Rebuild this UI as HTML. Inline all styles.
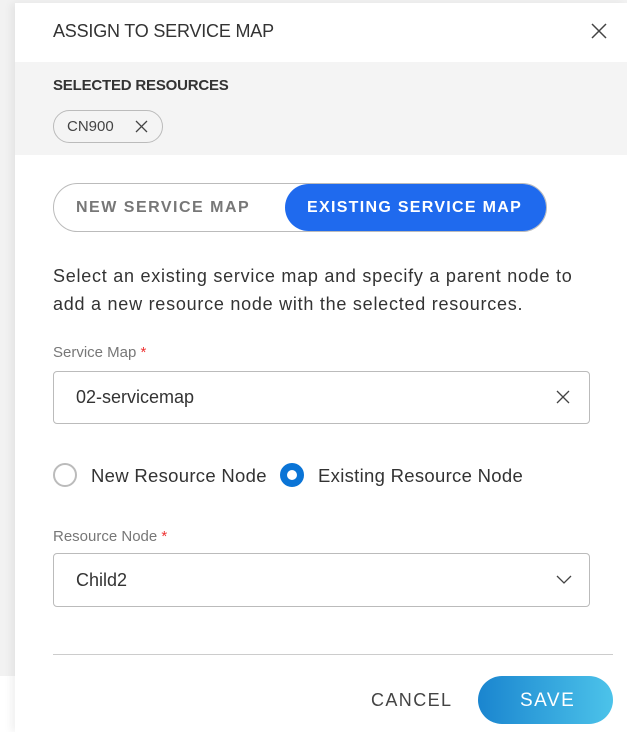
<!DOCTYPE html>
<html><head><style>
*{margin:0;padding:0;box-sizing:border-box}
body{width:627px;height:732px;background:#f2f2f2;font-family:"Liberation Sans",sans-serif;position:relative;overflow:hidden;color:#333}
.panel{position:absolute;left:15px;top:3px;width:612px;height:729px;background:#fff;box-shadow:-4px 0 8px rgba(0,0,0,0.06)}
.a{position:absolute}
</style></head><body>
<div class="a" style="left:0;top:676px;width:15px;height:56px;background:#fff"></div>
<div class="panel"></div>
<div class="a" style="left:53px;top:21px;font-size:18px;color:#333;letter-spacing:-0.2px">ASSIGN TO SERVICE MAP</div>
<svg class="a" style="left:590px;top:22px" width="18" height="18" viewBox="0 0 18 18"><path d="M2 2L16 16M16 2L2 16" stroke="#444" stroke-width="1.5"/></svg>
<div class="a" style="left:15px;top:62px;width:612px;height:93px;background:#f4f4f4"></div>
<div class="a" style="left:53px;top:77px;font-size:15px;font-weight:bold;color:#333;letter-spacing:-0.2px">SELECTED RESOURCES</div>
<div class="a" style="left:53px;top:110px;width:110px;height:33px;border:1px solid #bbb;border-radius:17px"></div>
<div class="a" style="left:67px;top:118px;font-size:15px;color:#444">CN900</div>
<svg class="a" style="left:134px;top:119px" width="15" height="15" viewBox="0 0 15 15"><path d="M2 2L13 13M13 2L2 13" stroke="#444" stroke-width="1.3"/></svg>
<div class="a" style="left:53px;top:183px;width:494px;height:49px;border:1px solid #bbb;border-radius:25px"></div>
<div class="a" style="left:285px;top:184px;width:261px;height:47px;background:#1f6aee;border-radius:24px"></div>
<div class="a" style="left:76px;top:199px;font-size:16px;font-weight:bold;color:#777;letter-spacing:1.5px">NEW SERVICE MAP</div>
<div class="a" style="left:307px;top:199px;font-size:16px;font-weight:bold;color:#fff;letter-spacing:1.3px">EXISTING SERVICE MAP</div>
<div class="a" style="left:53px;top:262px;font-size:18px;color:#333;line-height:28px;width:570px;letter-spacing:0.75px;white-space:nowrap">Select an existing service map and specify a parent node to<br>add a new resource node with the selected resources.</div>
<div class="a" style="left:53px;top:344px;font-size:15px;color:#777">Service Map <span style="color:#e33">*</span></div>
<div class="a" style="left:53px;top:371px;width:537px;height:53px;border:1px solid #bbb;border-radius:4px"></div>
<div class="a" style="left:76px;top:387px;font-size:18px;color:#333">02-servicemap</div>
<svg class="a" style="left:556px;top:390px" width="14" height="14" viewBox="0 0 14 14"><path d="M1 1L13 13M13 1L1 13" stroke="#444" stroke-width="1.3"/></svg>
<div class="a" style="left:53px;top:463px;width:24px;height:24px;border:2px solid #bbb;border-radius:50%"></div>
<div class="a" style="left:91px;top:465px;font-size:18.5px;color:#333;letter-spacing:0.3px">New Resource Node</div>
<div class="a" style="left:280px;top:463px;width:24px;height:24px;border:7px solid #0a74d6;border-radius:50%;background:#fff"></div>
<div class="a" style="left:318px;top:465px;font-size:18.5px;color:#333;letter-spacing:0.3px">Existing Resource Node</div>
<div class="a" style="left:53px;top:528px;font-size:15px;color:#777">Resource Node <span style="color:#e33">*</span></div>
<div class="a" style="left:53px;top:553px;width:537px;height:54px;border:1px solid #bbb;border-radius:4px"></div>
<div class="a" style="left:76px;top:570px;font-size:18px;color:#333">Child2</div>
<svg class="a" style="left:555px;top:573px" width="18" height="12" viewBox="0 0 18 12"><path d="M2 3L9 10L16 3" stroke="#444" stroke-width="1.3" fill="none"/></svg>
<div class="a" style="left:53px;top:654px;width:560px;height:1px;background:#ccc"></div>
<div class="a" style="left:371px;top:690px;font-size:18px;color:#444;letter-spacing:1.4px">CANCEL</div>
<div class="a" style="left:478px;top:676px;width:135px;height:48px;border-radius:24px;background:linear-gradient(90deg,#1a85cf,#4cc3ea)"></div>
<div class="a" style="left:520px;top:690px;font-size:19px;color:#fff;letter-spacing:1.5px">SAVE</div>
</body></html>
